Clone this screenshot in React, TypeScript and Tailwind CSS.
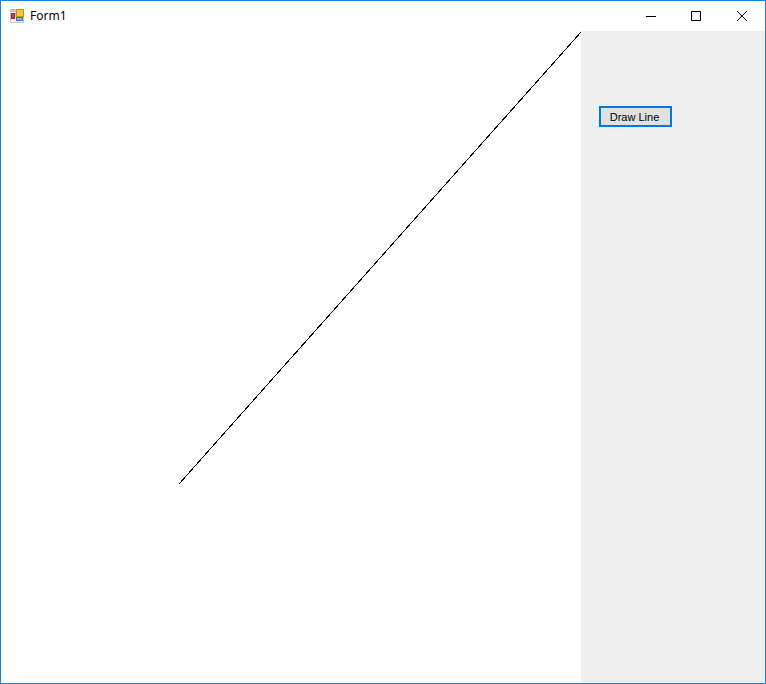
export default function App() {
  return (
    <div className="flex h-[684px] w-[766px] flex-col border border-[#1883d7] bg-white text-black">
      <header className="flex h-[30px] shrink-0 items-center">
        <svg width="16" height="16" viewBox="0 0 16 16" className="ml-[9px]" shapeRendering="crispEdges">
          <rect x="0" y="1" width="14" height="14" fill="#c4c4c4" />
          <rect x="1" y="4" width="4" height="1" fill="#f4f4f4" />
          <rect x="1" y="11" width="4" height="3" fill="#f4f4f4" />
          <rect x="5" y="9" width="1" height="5" fill="#f4f4f4" />
          <rect x="6" y="13" width="7" height="1" fill="#f4f4f4" />
          <rect x="6" y="1" width="8" height="8" fill="#c8940f" />
          <rect x="7" y="2" width="6" height="6" fill="#f6c445" />
          <rect x="1" y="5" width="4" height="6" fill="#9c2a22" />
          <rect x="2" y="6" width="2" height="3" fill="#d9483b" />
          <rect x="6" y="9" width="7" height="4" fill="#3f74c4" />
          <rect x="7" y="10" width="5" height="2" fill="#8fb4ea" />
        </svg>
        <span className="ml-[4px] font-['Noto_Sans',sans-serif] text-[12px] leading-none">Form1</span>
        <div className="ml-auto flex h-full items-center">
          <button className="grid h-full w-[46px] place-items-center pl-[2px]">
            <svg width="10" height="10" viewBox="0 0 10 10" shapeRendering="crispEdges">
              <rect x="0" y="5" width="10" height="1" fill="#000" />
            </svg>
          </button>
          <button className="grid h-full w-[46px] place-items-center">
            <svg width="10" height="10" viewBox="0 0 10 10" shapeRendering="crispEdges">
              <rect x="0.5" y="0.5" width="9" height="9" fill="none" stroke="#000" />
            </svg>
          </button>
          <button className="grid h-full w-[46px] place-items-center">
            <svg width="10" height="10" viewBox="0 0 10 10">
              <path d="M0 0L10 10M10 0L0 10" fill="none" stroke="#000" strokeWidth="1" />
            </svg>
          </button>
        </div>
      </header>
      <div className="flex min-h-0 flex-1">
        <div className="w-[580px] shrink-0">
          <svg width="580" height="652" viewBox="0 0 580 652" className="block" shapeRendering="crispEdges">
            <line x1="178" y1="453" x2="580" y2="1" stroke="#000" strokeWidth="1" />
          </svg>
        </div>
        <div className="flex-1 bg-[#efefef] pl-[18px] pt-[75px]">
          <button className="block h-[21px] w-[73px] border-2 border-[#0078d7] bg-[#e1e1e1] pt-px pr-[2px] font-['Liberation_Sans',sans-serif] text-[11px] leading-none text-black">
            Draw Line
          </button>
        </div>
      </div>
    </div>
  );
}
